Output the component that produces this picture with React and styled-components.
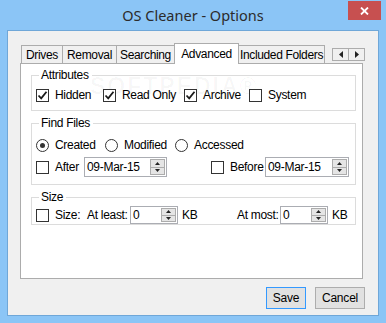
import React from "react";
import styled, { createGlobalStyle, css } from "styled-components";

const Global = createGlobalStyle`
  html, body { margin: 0; padding: 0; background: #8cc6f7; }
  body { font-family: "Liberation Sans", Arial, sans-serif; }
  * { box-sizing: border-box; }
`;

const Window = styled.div`
  width: 386px;
  height: 323px;
  background: #8bc5f6;
  display: flex;
  flex-direction: column;
  overflow: hidden;
`;

const TitleBar = styled.div`
  height: 30px;
  display: grid;
  grid-template-columns: 1fr auto 1fr;
  align-items: start;
`;

const Title = styled.div`
  grid-column: 2;
  font-family: "Noto Sans", "Open Sans", sans-serif;
  font-size: 14.5px;
  color: #2b2b2b;
  line-height: 20px;
  padding-top: 5px;
`;

const CloseButton = styled.div`
  grid-column: 3;
  justify-self: end;
  margin: 1px 5px 0 0;
  width: 33px;
  height: 19px;
  background: #c75050;
  display: flex;
  align-items: center;
  justify-content: center;
`;

const Client = styled.div`
  margin: 0 7px 7px 7px;
  flex: 1;
  border: 1px solid #6fa7d8;
  background: #f0f0f0;
  display: flex;
  flex-direction: column;
`;

const TabArea = styled.div`
  margin: 12px 15px 0 12px;
  display: flex;
  flex-direction: column;
`;

const TabStrip = styled.div`
  height: 21px;
  display: flex;
  align-items: flex-end;
  padding-left: 2px;
  margin-bottom: -1px;
  position: relative;
  z-index: 1;
`;

const Tab = styled.div`
  width: ${(p) => p.$w}px;
  height: ${(p) => (p.$active ? 21 : 19)}px;
  border: 1px solid #acacac;
  border-bottom: ${(p) => (p.$active ? "none" : "1px solid #acacac")};
  margin-left: -1px;
  background: ${(p) => (p.$active ? "#ffffff" : "#f0f0f0")};
  font-size: 12px;
  letter-spacing: -0.35px;
  color: #000;
  display: flex;
  justify-content: center;
  padding-top: ${(p) => (p.$active ? 3 : 2)}px;
  ${(p) => p.$active && css`z-index: 2;`}
`;

const Spacer = styled.div`
  flex: 1;
  align-self: stretch;
  border-bottom: 1px solid #acacac;
`;

const ScrollArrows = styled.div`
  display: flex;
  position: absolute;
  right: -2px;
  top: 5px;
`;

const ArrowBtn = styled.div`
  width: 17px;
  height: 13px;
  border: 1px solid #acacac;
  background: #f0f0f0;
  margin-left: -1px;
  display: flex;
  align-items: center;
  justify-content: center;
`;

const Panel = styled.div`
  height: 216px;
  background: #fff;
  border: 1px solid #acacac;
  padding: 4px 6px 0 10px;
  display: flex;
  flex-direction: column;
  gap: 5px;
  position: relative;
`;

const Group = styled.fieldset`
  margin: 0;
  border: 1px solid #dcdcdc;
  padding: ${(p) => p.$pad};
  display: flex;
  flex-direction: column;
  gap: ${(p) => p.$gap || 0}px;
  position: relative;
`;

const Legend = styled.legend`
  font-size: 12px;
  letter-spacing: -0.3px;
  line-height: 14px;
  padding: 0 3px 0 2px;
  margin-left: 3px;
  color: #000;
`;

const Row = styled.div`
  display: flex;
  align-items: center;
  height: ${(p) => p.$h || 20}px;
`;

const Item = styled.label`
  display: flex;
  align-items: center;
  white-space: nowrap;
  width: ${(p) => (p.$w ? p.$w + "px" : "auto")};
  margin-left: ${(p) => p.$ml || 0}px;
  font-size: 12px;
  letter-spacing: -0.3px;
  color: #000;
`;

const Box = styled.span`
  width: 13px;
  height: 13px;
  border: 1px solid #333;
  background: #fff;
  display: inline-flex;
  align-items: center;
  justify-content: center;
  margin-right: 6px;
  flex: none;
`;

const Round = styled.span`
  width: 13px;
  height: 13px;
  border: 1px solid #333;
  border-radius: 50%;
  background: #fff;
  display: inline-flex;
  align-items: center;
  justify-content: center;
  margin-right: 6px;
  flex: none;
  &::after {
    content: "";
    display: ${(p) => (p.$on ? "block" : "none")};
    width: 5px;
    height: 5px;
    border-radius: 50%;
    background: #333;
  }
`;

const Text = styled.span`
  white-space: nowrap;
  width: ${(p) => (p.$w ? p.$w + "px" : "auto")};
  font-size: 12px;
  letter-spacing: -0.3px;
  color: #000;
  margin-left: ${(p) => p.$ml || 0}px;
  flex: none;
`;

const Spin = styled.div`
  width: ${(p) => p.$w}px;
  height: ${(p) => p.$h}px;
  border: 1px solid #abadb3;
  background: #fff;
  display: flex;
  align-items: center;
  margin-left: ${(p) => p.$ml || 0}px;
  padding: 0 1px 0 2px;
  flex: none;
`;

const SpinValue = styled.span`
  flex: 1;
  font-size: 12px;
  letter-spacing: -0.3px;
  color: #000;
  padding-bottom: 1px;
`;

const SpinButtons = styled.div`
  width: 15px;
  height: ${(p) => p.$h}px;
  display: flex;
  flex-direction: column;
  border: 1px solid #acacac;
  background: #e5e5e5;
`;

const SpinHalf = styled.div`
  flex: 1;
  display: flex;
  align-items: center;
  justify-content: center;
  & + & { border-top: 1px solid #acacac; }
`;

const ButtonRow = styled.div`
  display: flex;
  justify-content: flex-end;
  gap: 9px;
  margin: 8px 13px 0 0;
`;

const Button = styled.div`
  width: ${(p) => p.$w}px;
  height: 22px;
  border: 1px solid ${(p) => (p.$default ? "#3399ff" : "#adadad")};
  background: #e1e1e1;
  display: flex;
  align-items: center;
  justify-content: center;
  font-size: 12px;
  letter-spacing: -0.2px;
  color: #000;
  padding-bottom: 1px;
`;

const Watermark = styled.div`
  position: absolute;
  left: 69px;
  top: 9px;
  font-family: "Liberation Sans", sans-serif;
  font-weight: bold;
  font-size: 23px;
  letter-spacing: 2px;
  color: rgba(0, 0, 0, 0.03);
  pointer-events: none;
  white-space: nowrap;
`;

const Check = () => (
  <svg width="11" height="11" viewBox="0 0 11 11">
    <path d="M1.5 5.5 L4.2 8.3 L9.5 1.8" fill="none" stroke="#1a1a1a" strokeWidth="1.8" />
  </svg>
);

const CheckBox = ({ on, label, w, ml }) => (
  <Item $w={w} $ml={ml}>
    <Box>{on && <Check />}</Box>
    {label}
  </Item>
);

const Radio = ({ on, label, w }) => (
  <Item $w={w}>
    <Round $on={on} />
    {label}
  </Item>
);

const Tri = ({ up }) => (
  <svg width="5" height="3" viewBox="0 0 5 3">
    <path d={up ? "M0 3 L2.5 0 L5 3Z" : "M0 0 L2.5 3 L5 0Z"} fill="#222" />
  </svg>
);

const SpinBox = ({ value, w, ml, h = 20 }) => (
  <Spin $w={w} $ml={ml} $h={h}>
    <SpinValue>{value}</SpinValue>
    <SpinButtons $h={h - 4}>
      <SpinHalf><Tri up /></SpinHalf>
      <SpinHalf><Tri /></SpinHalf>
    </SpinButtons>
  </Spin>
);

const SideArrow = ({ left }) => (
  <svg width="4" height="7" viewBox="0 0 4 7">
    <path d={left ? "M4 0 L0 3.5 L4 7Z" : "M0 0 L4 3.5 L0 7Z"} fill="#222" />
  </svg>
);

export default function App() {
  return (
    <>
      <Global />
      <Window>
        <TitleBar>
          <Title>OS Cleaner - Options</Title>
          <CloseButton>
            <svg width="9" height="8" viewBox="0 0 9 8">
              <path d="M1 0.5 L8 7.5 M8 0.5 L1 7.5" stroke="#fff" strokeWidth="1.8" />
            </svg>
          </CloseButton>
        </TitleBar>
        <Client>
          <TabArea>
            <TabStrip>
              <Tab $w={42}>Drives</Tab>
              <Tab $w={55}>Removal</Tab>
              <Tab $w={59}>Searching</Tab>
              <Tab $w={65} $active>Advanced</Tab>
              <Tab $w={87}>Included Folders</Tab>
              <Spacer />
              <ScrollArrows>
                <ArrowBtn><SideArrow left /></ArrowBtn>
                <ArrowBtn><SideArrow /></ArrowBtn>
              </ScrollArrows>
            </TabStrip>
            <Panel>
              <Watermark>SOFTPEDIA®</Watermark>
              <Group $pad="3px 4px 5px 4px">
                <Legend>Attributes</Legend>
                <Row>
                  <CheckBox on label="Hidden" w={67} />
                  <CheckBox on label="Read Only" w={81} />
                  <CheckBox on label="Archive" w={65} />
                  <CheckBox label="System" />
                </Row>
              </Group>
              <Group $pad="5px 4px 7px 4px" $gap={2}>
                <Legend>Find Files</Legend>
                <Row>
                  <Radio on label="Created" w={69} />
                  <Radio label="Modified" w={70} />
                  <Radio label="Accessed" />
                </Row>
                <Row>
                  <CheckBox label="After" w={48} />
                  <SpinBox value="09-Mar-15" w={83} />
                  <CheckBox label="Before" ml={44} w={54} />
                  <SpinBox value="09-Mar-15" w={84} />
                </Row>
              </Group>
              <Group $pad="2px 4px 0 4px">
                <Legend>Size</Legend>
                <Row $h={18}>
                  <CheckBox label="Size:" w={51} />
                  <Text $w={43}>At least:</Text>
                  <SpinBox value="0" w={48} h={18} />
                  <Text $ml={4} $w={16}>KB</Text>
                  <Text $ml={39} $w={43}>At most:</Text>
                  <SpinBox value="0" w={48} h={18} />
                  <Text $ml={4}>KB</Text>
                </Row>
              </Group>
            </Panel>
          </TabArea>
          <ButtonRow>
            <Button $w={40} $default>Save</Button>
            <Button $w={50}>Cancel</Button>
          </ButtonRow>
        </Client>
      </Window>
    </>
  );
}
